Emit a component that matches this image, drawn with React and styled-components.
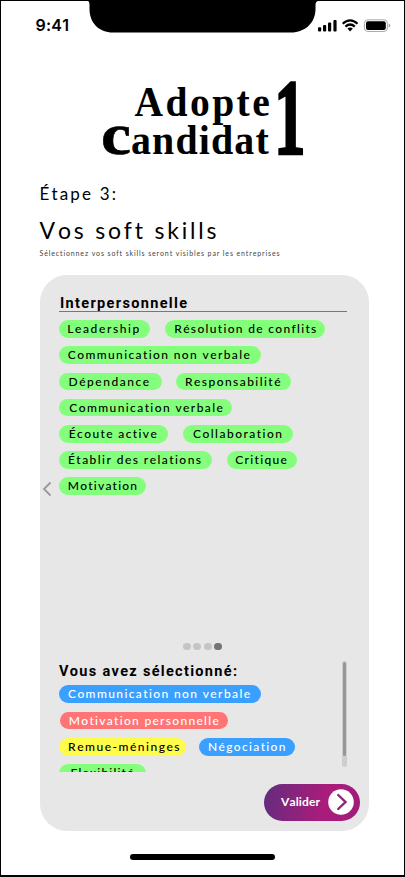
import React, { useLayoutEffect, useRef } from "react";
import styled, { createGlobalStyle } from "styled-components";

const GlobalStyle = createGlobalStyle`
  * { box-sizing: border-box; }
  body { margin: 0; background: #fff; font-family: Lato, "Open Sans", sans-serif; color: #000; }
`;

const Screen = styled.main`
  width: 405px;
  height: 877px;
  display: flex;
  flex-direction: column;
  border: 1px solid #000;
  border-bottom-width: 2px;
  background: #fff;
  overflow: hidden;
`;

const StatusBar = styled.header`
  height: 69px;
  display: grid;
  grid-template-columns: 87px 230px 1fr;
  flex: none;
`;

const Clock = styled.time`
  padding: 14px 0 0 34.5px;
  font: 600 16px/20px Inter, sans-serif;
`;

const Notch = styled.svg`
  width: 230px;
  height: 32px;
  display: block;
`;

const StatusIcons = styled.svg`
  width: 74px;
  height: 16px;
  margin-top: 17px;
  display: block;
`;

const Logo = styled.svg`
  width: 210px;
  height: 86px;
  margin-left: 97px;
  display: block;
  flex: none;
  overflow: visible;
  font-family: "Liberation Serif", serif;
  font-weight: 700;
`;

const Intro = styled.section`
  height: 119px;
  padding: 28px 0 0 38.5px;
  flex: none;
`;

const Step = styled.p`
  margin: 0;
  font-size: 17px;
  line-height: 20px;
`;

const Title = styled.h1`
  margin: 12px 0 0;
  font-size: 23px;
  font-weight: 400;
  line-height: 28px;
`;

const Hint = styled.p`
  margin: 5px 0 0;
  font-size: 7px;
  line-height: 9px;
  color: #444;
`;

const Panel = styled.section`
  width: 329px;
  height: 556px;
  margin-left: 38.5px;
  padding-top: 19px;
  display: flex;
  flex-direction: column;
  flex: none;
  border-radius: 27px;
  background: #e7e7e7;
`;

const Heading = styled.h2`
  width: 288px;
  height: ${(p) => (p.$ruled ? 17.7 : 19.7)}px;
  margin: 0 0 0 ${(p) => (p.$ruled ? 19 : 19.5)}px;
  padding-left: ${(p) => (p.$ruled ? 1.5 : 0)}px;
  border-bottom: ${(p) => (p.$ruled ? "1.5px solid #777" : "0")};
  font: 700 14.5px/${(p) => (p.$ruled ? 19 : 21)}px Roboto, sans-serif;
`;

const Carousel = styled.div`
  height: 331px;
  padding: 8.5px 0 0 2px;
  display: grid;
  grid-template-columns: 17.5px 1fr;
`;

const Previous = styled.button`
  width: 10px;
  height: 16px;
  margin-top: 161px;
  padding: 0;
  border: 0;
  background: none;
  svg { display: block; }
`;

const TagRows = styled.div`
  display: flex;
  flex-direction: column;
  gap: 8.5px;
`;

const TagRow = styled.div`
  height: 17.7px;
  display: flex;
  flex: none;
`;

const tones = {
  green: ["#84ff7c", "#000"],
  blue: ["#3aa0ff", "#fff"],
  red: ["#ff7474", "#fff"],
  yellow: ["#fffb4b", "#000"],
};

const Pill = styled.span`
  width: ${(p) => p.$width}px;
  height: 17.7px;
  margin-left: ${(p) => p.$before}px;
  padding: ${(p) => p.$drop}px 0 0 ${(p) => p.$inset}px;
  flex: none;
  border-radius: 9px;
  background: ${(p) => tones[p.$tone][0]};
  color: ${(p) => tones[p.$tone][1]};
  font-size: 12px;
  font-weight: 500;
  line-height: 18px;
`;

const Dots = styled.div`
  height: 8px;
  margin: 0 0 10.5px 143.5px;
  display: flex;
  gap: 2.6px;
  flex: none;
`;

const Dot = styled.i`
  width: 7.8px;
  height: 7.8px;
  border-radius: 50%;
  background: ${(p) => (p.$active ? "#747474" : "#c5c5c5")};
`;

const Selection = styled.div`
  height: 110.5px;
  display: grid;
  grid-template-columns: 302px 5px;
  flex: none;
`;

const SelectionList = styled.div`
  height: 110.5px;
  overflow: hidden;
`;

const SelectedRows = styled(TagRows)`
  margin: 4.6px 0 0 19.5px;
`;

const ScrollTrack = styled.div`
  height: 106px;
  padding: 1px 1px 0;
  border-radius: 3px;
  background: #cecece;
`;

const ScrollThumb = styled.div`
  height: 94px;
  border-radius: 2px;
  background: #979797;
`;

const Submit = styled.button`
  width: 96px;
  height: 37px;
  margin: 12px 0 0 224.5px;
  padding: 0 6px 0 17px;
  display: flex;
  align-items: center;
  justify-content: space-between;
  flex: none;
  border: 0;
  border-radius: 19px;
  background: linear-gradient(100deg, #682b7e 5%, #ab1c7b 62%, #a01c79);
  color: #fff;
  font: 700 12px/16px Lato, sans-serif;
`;

const SubmitLabel = styled.span`
  margin-top: -1px;
`;

const HomeIndicator = styled.div`
  width: 145px;
  height: 5.5px;
  margin: 23px 0 0 129px;
  flex: none;
  border-radius: 3px;
  background: #000;
`;

const Line = styled.span`
  display: inline-block;
  white-space: nowrap;
  font-kerning: none;
  font-variant-ligatures: none;
`;

// Spreads the letters evenly so that the line spans a given width.
function Tracked({ width, children }) {
  const ref = useRef(null);
  useLayoutEffect(() => {
    const fit = () => {
      const el = ref.current;
      if (!el) return;
      el.style.letterSpacing = "0px";
      const natural = el.getBoundingClientRect().width;
      el.style.letterSpacing = `${(width - natural) / (children.length - 1)}px`;
    };
    fit();
    document.fonts?.ready.then(fit);
  }, [width, children]);
  return <Line ref={ref}>{children}</Line>;
}

// [label, gap before, pill width, text inset, text width, tone, text drop]
const skills = [
  [["Leadership", 0, 91, 8.3, 72], ["Résolution de conflits", 15, 159.5, 9.3, 142]],
  [["Communication non verbale", 0, 202, 8.8, 182]],
  [["Dépendance", 0, 102.5, 9.5, 80.5], ["Responsabilité", 14.5, 114.5, 9, 95.5]],
  [["Communication verbale", 0, 173, 10.3, 153.5]],
  [["Écoute active", 0, 109, 9.8, 88], ["Collaboration", 15, 110, 10, 89]],
  [["Établir des relations", 0, 152.5, 9, 133], ["Critique", 15, 70.5, 8.8, 51.5]],
  [["Motivation", 0, 87, 8.8, 69.3]],
];

const selected = [
  [["Communication non verbale", 0, 202, 9, 182, "blue"]],
  [["Motivation personnelle", 1, 167.5, 8.8, 150, "red"]],
  [["Remue-méninges", 0.3, 127.2, 8.8, 111.5, "yellow"], ["Négociation", 12.5, 96, 9, 77.5, "blue"]],
  [["Flexibilité", 0, 87, 11.5, 63, "green", 0]],
];

function Tags({ rows }) {
  return rows.map((row) => (
    <TagRow key={row[0][0]}>
      {row.map(([label, before, width, inset, span, tone = "green", drop = 0]) => (
        <Pill key={label} $before={before} $width={width} $inset={inset} $tone={tone} $drop={drop}>
          <Tracked width={span}>{label}</Tracked>
        </Pill>
      ))}
    </TagRow>
  ));
}

export default function App() {
  return (
    <>
      <GlobalStyle />
      <Screen>
        <StatusBar>
          <Clock><Tracked width={33.5}>9:41</Tracked></Clock>
          <Notch viewBox="0 0 230 32" aria-hidden="true">
            <path d="M0 0Q1.5.5 1.5 4V8C1.5 22 11 31.5 25 31.5H203C217 31.5 227.5 22 227.5 8V4Q227.5.5 230 0Z" />
          </Notch>
          <StatusIcons viewBox="0 0 74 16" aria-hidden="true">
            <rect x="0" y="9.2" width="3.2" height="4.2" rx="1" />
            <rect x="5" y="7" width="3.2" height="6.4" rx="1" />
            <rect x="10" y="4.5" width="3.2" height="8.9" rx="1" />
            <rect x="15.4" y="2" width="3.2" height="11.4" rx="1" />
            <g fill="none" stroke="#000" strokeWidth="2.2">
              <path d="M24.7 5.7Q32.1-1.1 39.5 5.7" />
              <path d="M27.4 8.6Q32.1 4.4 36.8 8.6" />
            </g>
            <path d="M29.4 10.6Q32.1 8.3 34.8 10.6L32.1 13.4Z" />
            <rect x="46.4" y="1.8" width="23" height="11.7" rx="3.5" fill="none" stroke="#aaa" />
            <rect x="48" y="3.3" width="19.8" height="8.7" rx="2" />
            <path d="M70.7 5.5Q72.4 6 72.4 7.6T70.7 9.7Z" fill="#aaa" />
          </StatusIcons>
        </StatusBar>
        <Logo viewBox="98 70 210 86">
          <text transform="translate(134.5 116) scale(.92 1)" fontSize="43" textLength="147" lengthAdjust="spacing">Adopte</text>
          <text x="101" y="154" fontSize="60" textLength="30" lengthAdjust="spacingAndGlyphs" stroke="#000" strokeWidth=".6">c</text>
          <text transform="translate(131 154) scale(.95 1)" fontSize="42" textLength="145" lengthAdjust="spacing">andidat</text>
          <text transform="translate(274 154) scale(.59 1)" fontSize="107" stroke="#000" strokeWidth="2.5">1</text>
        </Logo>
        <Intro>
          <Step><Tracked width={76.5}>Étape 3:</Tracked></Step>
          <Title><Tracked width={177}>Vos soft skills</Tracked></Title>
          <Hint><Tracked width={240}>Sélectionnez vos soft skills seront visibles par les entreprises</Tracked></Hint>
        </Intro>
        <Panel>
          <Heading $ruled><Tracked width={127}>Interpersonnelle</Tracked></Heading>
          <Carousel>
            <Previous aria-label="Précédent">
              <svg width="10" height="16" fill="none" stroke="#999" strokeWidth="1.8">
                <path d="M8.5 1.5 2 8 8.5 14.5" />
              </svg>
            </Previous>
            <TagRows><Tags rows={skills} /></TagRows>
          </Carousel>
          <Dots><Dot /><Dot /><Dot /><Dot $active /></Dots>
          <Selection>
            <SelectionList>
              <Heading><Tracked width={178}>Vous avez sélectionné:</Tracked></Heading>
              <SelectedRows><Tags rows={selected} /></SelectedRows>
            </SelectionList>
            <ScrollTrack><ScrollThumb /></ScrollTrack>
          </Selection>
          <Submit>
            <SubmitLabel><Tracked width={39}>Valider</Tracked></SubmitLabel>
            <svg width="26" height="26" fill="none" aria-hidden="true">
              <circle cx="13" cy="13" r="12.8" fill="#fff" />
              <path d="M10.2 6 17.5 13 10.2 20" stroke="#8f247b" strokeWidth="2.4" strokeLinecap="round" />
            </svg>
          </Submit>
        </Panel>
        <HomeIndicator />
      </Screen>
    </>
  );
}
